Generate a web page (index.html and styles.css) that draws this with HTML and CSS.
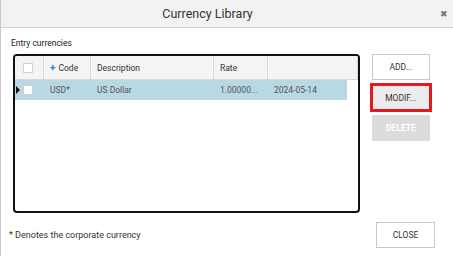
FILE: index.html
```html
<!DOCTYPE html>
<html lang="en">
<head>
    <meta charset="UTF-8">
    <meta name="viewport" content="width=device-width, initial-scale=1.0">
    <title>Currency Library</title>
    <link rel="stylesheet" href="styles.css">
</head>
<body>

    <!-- DIALOG -->
    <div class="dialog">
        <div class="dialog-header">
            <span class="dialog-title">Currency Library</span>
            <span class="dialog-close">&#10006;</span>
        </div>

        <div class="dialog-body">
            <div class="main-row">
                <div class="table-area">
                    <p class="section-label">Entry currencies</p>
                    <div class="grid-box">
                        <div class="grid-head">
                            <div class="cell cell-check"><span class="checkbox"></span></div>
                            <div class="cell cell-code"><span class="sort-plus">+</span>Code</div>
                            <div class="cell cell-desc">Description</div>
                            <div class="cell cell-rate">Rate</div>
                            <div class="cell cell-date"></div>
                        </div>
                        <div class="grid-row selected">
                            <div class="cell cell-check"><span class="row-arrow"></span><span class="checkbox"></span></div>
                            <div class="cell cell-code">USD*</div>
                            <div class="cell cell-desc">US Dollar</div>
                            <div class="cell cell-rate">1.00000...</div>
                            <div class="cell cell-date">2024-05-14</div>
                        </div>
                    </div>
                </div>

                <div class="side-buttons">
                    <button class="btn">ADD...</button>
                    <button class="btn btn-focus">MODIF...</button>
                    <button class="btn btn-disabled">DELETE</button>
                </div>
            </div>

            <div class="footer-row">
                <p class="note">* Denotes the corporate currency</p>
                <button class="btn btn-close">CLOSE</button>
            </div>
        </div>
    </div>

</body>
</html>
```

FILE: styles.css
```css
* {
    margin: 0;
    padding: 0;
    box-sizing: border-box;
    font-family: Roboto, "Liberation Sans", sans-serif;
}

body {
    width: 453px;
    height: 256px;
    background: white;
    overflow: hidden;
}

.dialog {
    height: 256px;
    border-left: 1px solid #c8c8c8;
    display: flex;
    flex-direction: column;
}

/* HEADER */
.dialog-header {
    height: 28px;
    padding-right: 39px;
    background: #f2f2f2;
    border-bottom: 1px solid #d2d2d2;
    display: flex;
    justify-content: center;
    align-items: center;
    position: relative;
}

.dialog-title {
    font-size: 12.5px;
    color: #333;
}

.dialog-close {
    position: absolute;
    right: 5px;
    top: 9px;
    font-size: 9px;
    color: #777;
}

/* BODY */
.dialog-body {
    flex: 1;
    display: flex;
    flex-direction: column;
    padding: 10px 18px 8px 7px;
}

.main-row {
    display: flex;
    gap: 12px;
}

.table-area { width: 352px; flex: none; }

.section-label {
    font-size: 8.5px;
    color: #222;
    padding-left: 3px;
    margin-bottom: 6px;
}

.grid-box {
    margin-left: 5px;
    height: 159px;
    border: 2px solid #111;
    border-radius: 4px;
    overflow: hidden;
}

.grid-head, .grid-row {
    display: flex;
    height: 24px;
    font-size: 8.5px;
    color: #333;
}

.grid-head {
    background: #f4f4f4;
    border-bottom: 1px solid #d8d8d8;
}

.grid-row {
    height: 20px;
    width: 332px;
    color: #555;
}

.grid-row.selected { background: #b8d8e4; }

.cell {
    display: flex;
    align-items: center;
    padding-left: 6px;
}

.grid-head .cell { border-right: 1px solid #d8d8d8; }

.cell-check { width: 29px; padding-left: 8px; position: relative; }
.cell-code { width: 47px; }
.cell-desc { width: 123px; }
.cell-rate { width: 54px; }
.cell-date { flex: 1; }
.grid-row .cell-date { flex: none; width: 79px; }

.cell-code { padding-left: 6px; }

.checkbox {
    width: 10px;
    height: 10px;
    background: white;
    border: 1px solid #d0d0d0;
}

.row-arrow {
    position: absolute;
    left: 1px;
    top: 6px;
    border-left: 4px solid #111;
    border-top: 4px solid transparent;
    border-bottom: 4px solid transparent;
}

.sort-plus {
    color: #2a7fd0;
    font-size: 10px;
    font-weight: bold;
    margin-right: 3px;
}

/* BUTTONS */
.side-buttons {
    display: flex;
    flex-direction: column;
    gap: 3px;
    padding-top: 16px;
}

.btn {
    width: 58px;
    height: 26px;
    background: white;
    border: 1px solid #c8c8c8;
    font-size: 8.5px;
    color: #333;
}

.btn-focus {
    width: 62px;
    height: 29px;
    margin-left: -2px;
    background: #ececec;
    border: 3px solid #e3191f;
}

.btn-disabled {
    background: #dcdcdc;
    border-color: #dcdcdc;
    color: white;
    font-weight: bold;
}

/* FOOTER */
.footer-row {
    margin-top: auto;
    display: flex;
    justify-content: space-between;
    align-items: center;
    padding-left: 1px;
}

.note {
    font-size: 9px;
    color: #333;
}

.btn-close {
    width: 59px;
}
```
